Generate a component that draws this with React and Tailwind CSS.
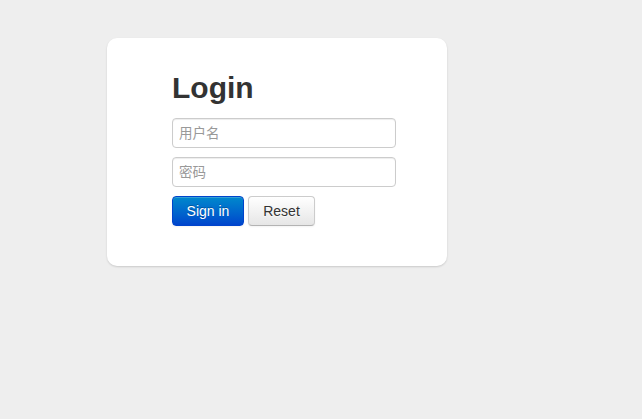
export default function App() {
  return (
    <div className="min-h-[419px] bg-[#eeeeee] pt-[38px] pl-[107px] font-['Liberation_Sans','Noto_Sans_CJK_SC',sans-serif] text-[14px] text-[#333333]">
      {/* login card */}
      <div className="w-[340px] rounded-[10px] bg-white pt-[20px] pb-[40px] pl-[65px] shadow-[0_1px_2px_rgba(0,0,0,0.15)]">
        <h2 className="my-[10px] text-[30px] leading-[40px] font-bold text-[#333333]">
          Login
        </h2>
        <form className="flex flex-col gap-[9px]" onSubmit={(e) => e.preventDefault()}>
          <input
            type="text"
            placeholder="用户名"
            className="h-[30px] w-[224px] rounded-[4px] border border-[#cccccc] px-[6px] text-[14px] leading-[20px] text-[#555555] shadow-[inset_0_1px_1px_rgba(0,0,0,0.075)] outline-none placeholder:text-[13.5px] placeholder:text-[#999999]"
          />
          <input
            type="password"
            placeholder="密码"
            className="h-[30px] w-[224px] rounded-[4px] border border-[#cccccc] px-[6px] text-[14px] leading-[20px] text-[#555555] shadow-[inset_0_1px_1px_rgba(0,0,0,0.075)] outline-none placeholder:text-[13.5px] placeholder:text-[#999999]"
          />
          <div className="flex gap-[4px]">
            <button
              type="submit"
              className="h-[30px] w-[72px] rounded-[4px] border border-[#0044cc] bg-gradient-to-b from-[#0088cc] to-[#0044cc] text-[14px] leading-[20px] text-white shadow-[inset_0_1px_0_rgba(255,255,255,0.2),0_1px_2px_rgba(0,0,0,0.05)] [text-shadow:0_-1px_0_rgba(0,0,0,0.25)]"
            >
              Sign in
            </button>
            <button
              type="reset"
              className="h-[30px] w-[67px] rounded-[4px] border border-[#cccccc] border-b-[#b3b3b3] bg-gradient-to-b from-white to-[#e6e6e6] text-[14px] leading-[20px] text-[#333333] shadow-[inset_0_1px_0_rgba(255,255,255,0.2),0_1px_2px_rgba(0,0,0,0.05)] [text-shadow:0_1px_1px_rgba(255,255,255,0.75)]"
            >
              Reset
            </button>
          </div>
        </form>
      </div>
    </div>
  );
}
